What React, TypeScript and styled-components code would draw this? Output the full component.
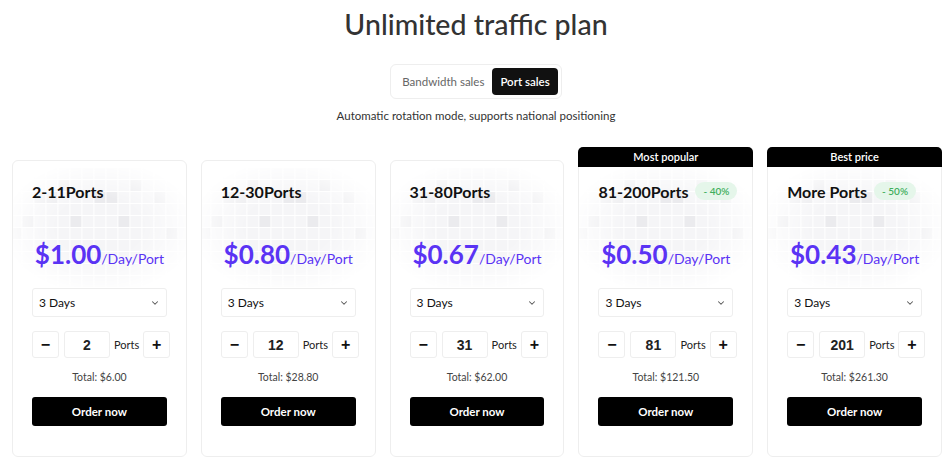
import styled, { createGlobalStyle } from 'styled-components'
import { useState } from 'react'

const GlobalStyle = createGlobalStyle`
  body {
    margin: 0;
    background: #fff;
    font-family: Lato, "Noto Sans", sans-serif;
    color: #222;
  }
`

type Plan = {
  name: string
  price: string
  start: number
  total: string
  ribbon?: string
  discount?: string
}

const plans: Plan[] = [
  { name: '2-11Ports', price: '$1.00', start: 2, total: '$6.00' },
  { name: '12-30Ports', price: '$0.80', start: 12, total: '$28.80' },
  { name: '31-80Ports', price: '$0.67', start: 31, total: '$62.00' },
  { name: '81-200Ports', price: '$0.50', start: 81, total: '$121.50', ribbon: 'Most popular', discount: '- 40%' },
  { name: 'More Ports', price: '$0.43', start: 201, total: '$261.30', ribbon: 'Best price', discount: '- 50%' },
]

// light squares drawn behind the top of every card
const darkCells = [
  [2, 2], [3, 2], [7, 2], [8, 2], [12, 2],
  [1, 4], [5, 4], [9, 4],
  [4, 1], [10, 1],
  [0, 5], [13, 5],
]

function CellPattern() {
  const cells = []
  for (let r = 0; r < 10; r++) {
    for (let c = 0; c < 15; c++) {
      const dark = darkCells.some(([x, y]) => x === c && y === r)
      cells.push(
        <rect key={`${r}-${c}`} x={c * 12 + 1} y={r * 12 + 1} width={11} height={11} fill={dark ? '#ebebee' : '#f5f5f7'} />
      )
    }
  }
  return (
    <Pattern width="180" height="120" viewBox="0 0 180 120" preserveAspectRatio="xMidYMin slice">
      {cells}
    </Pattern>
  )
}

function Card({ plan }: { plan: Plan }) {
  const [count, setCount] = useState(plan.start)
  return (
    <CardBox>
      {plan.ribbon && <Ribbon>{plan.ribbon}</Ribbon>}
      <CellPattern />
      <CardBody>
        <TitleRow>
          <PlanName>{plan.name}</PlanName>
          {plan.discount && <Discount>{plan.discount}</Discount>}
        </TitleRow>
        <Price>
          <strong>{plan.price}</strong>/Day/Port
        </Price>
        <Select>
          <span>3 Days</span>
          <svg width="10" height="10" viewBox="0 0 24 24" fill="none" stroke="#555" strokeWidth="2.5" strokeLinecap="round" strokeLinejoin="round">
            <path d="m6 9 6 6 6-6" />
          </svg>
        </Select>
        <Stepper>
          <StepButton onClick={() => setCount(Math.max(plan.start, count - 1))}>−</StepButton>
          <CountBox>{count}</CountBox>
          <Unit>Ports</Unit>
          <StepButton onClick={() => setCount(count + 1)}>+</StepButton>
        </Stepper>
        <Total>Total: {plan.total}</Total>
        <OrderButton>Order now</OrderButton>
      </CardBody>
    </CardBox>
  )
}

export default function App() {
  const [tab, setTab] = useState('port')
  return (
    <Page>
      <GlobalStyle />
      <Heading>Unlimited traffic plan</Heading>
      <Tabs>
        <Tab $active={tab === 'bandwidth'} onClick={() => setTab('bandwidth')}>Bandwidth sales</Tab>
        <Tab $active={tab === 'port'} onClick={() => setTab('port')}>Port sales</Tab>
      </Tabs>
      <Subtitle>Automatic rotation mode, supports national positioning</Subtitle>
      <Cards>
        {plans.map(p => (
          <Card key={p.name} plan={p} />
        ))}
      </Cards>
    </Page>
  )
}

const Page = styled.div`
  display: flex;
  flex-direction: column;
  align-items: center;
  padding-top: 5px;
`

const Heading = styled.h1`
  margin: 0;
  font-size: 28.5px;
  font-weight: 500;
  color: #333;
  line-height: 38px;
`

const Tabs = styled.div`
  margin-top: 21px;
  display: flex;
  padding: 3px;
  border: 1px solid #eee;
  border-radius: 6px;
`

const Tab = styled.button<{ $active: boolean }>`
  border: none;
  font-family: inherit;
  font-size: 11.5px;
  height: 27px;
  padding: 0 8px;
  border-radius: 4px;
  cursor: pointer;
  background: ${p => (p.$active ? '#111' : 'transparent')};
  color: ${p => (p.$active ? '#fff' : '#666')};
  font-weight: ${p => (p.$active ? 600 : 400)};
`

const Subtitle = styled.p`
  margin: 10px 0 0;
  font-size: 11.5px;
  color: #333;
`

const Cards = styled.div`
  align-self: stretch;
  margin-top: 38px;
  padding: 0 10px 0 12px;
  display: grid;
  grid-template-columns: repeat(5, minmax(0, 1fr));
  gap: 14px;
`

const CardBox = styled.div`
  position: relative;
  height: 295px;
  border: 1px solid #eee;
  border-radius: 6px;
  background: #fff;
`

const Ribbon = styled.div`
  position: absolute;
  top: -14px;
  left: -1px;
  right: -1px;
  height: 20px;
  background: #000;
  color: #fff;
  font-size: 11px;
  font-weight: 600;
  text-align: center;
  line-height: 20px;
  border-radius: 5px 5px 0 0;
  z-index: 1;
`

const Pattern = styled.svg`
  position: absolute;
  top: 6px;
  left: 0;
  width: 100%;
  height: 120px;
  -webkit-mask-image: radial-gradient(ellipse at center, #000 35%, transparent 80%);
  mask-image: radial-gradient(ellipse at center, #000 35%, transparent 80%);
`

const CardBody = styled.div`
  position: relative;
  padding: 19px 19px 0;
  display: flex;
  flex-direction: column;
`

const TitleRow = styled.div`
  display: flex;
  align-items: center;
  gap: 7px;
  height: 22px;
`

const PlanName = styled.span`
  font-size: 16px;
  font-weight: 700;
  color: #111;
  white-space: nowrap;
`

const Discount = styled.span`
  background: #e5f6ea;
  color: #3fae5c;
  font-size: 10px;
  font-weight: 600;
  padding: 3px 8px;
  border-radius: 10px;
  white-space: nowrap;
`

const Price = styled.div`
  margin-top: 36px;
  height: 32px;
  line-height: 32px;
  text-align: center;
  white-space: nowrap;
  color: #5a33f4;
  font-size: 14px;
  strong {
    font-size: 26px;
    font-weight: 700;
  }
`

const Select = styled.div`
  margin-top: 18px;
  height: 29px;
  box-sizing: border-box;
  border: 1px solid #eee;
  border-radius: 3px;
  display: flex;
  align-items: center;
  justify-content: space-between;
  padding: 0 6px;
  font-size: 12px;
  color: #111;
`

const Stepper = styled.div`
  margin-top: 14px;
  display: flex;
  align-items: center;
  height: 27px;
  gap: 4px;
`

const StepButton = styled.button`
  width: 27px;
  height: 27px;
  flex: none;
  border: 1px solid #eee;
  border-radius: 3px;
  background: #fff;
  font-size: 16px;
  font-weight: 700;
  padding: 0;
  color: #111;
  cursor: pointer;
`

const CountBox = styled.div`
  width: 46px;
  height: 27px;
  box-sizing: border-box;
  flex: none;
  border: 1px solid #eee;
  border-radius: 3px;
  display: flex;
  align-items: center;
  justify-content: center;
  font-family: "Liberation Sans", Arial, sans-serif;
  font-weight: 700;
  font-size: 14px;
  margin-left: 1px;
`

const Unit = styled.span`
  font-size: 11px;
  flex: 1;
`

const Total = styled.div`
  margin-top: 12px;
  line-height: 14px;
  text-align: center;
  font-size: 10.5px;
  color: #444;
`

const OrderButton = styled.button`
  margin-top: 13px;
  height: 29px;
  border: none;
  border-radius: 3px;
  background: #000;
  color: #fff;
  font-family: inherit;
  font-size: 11.5px;
  font-weight: 700;
  cursor: pointer;
`
